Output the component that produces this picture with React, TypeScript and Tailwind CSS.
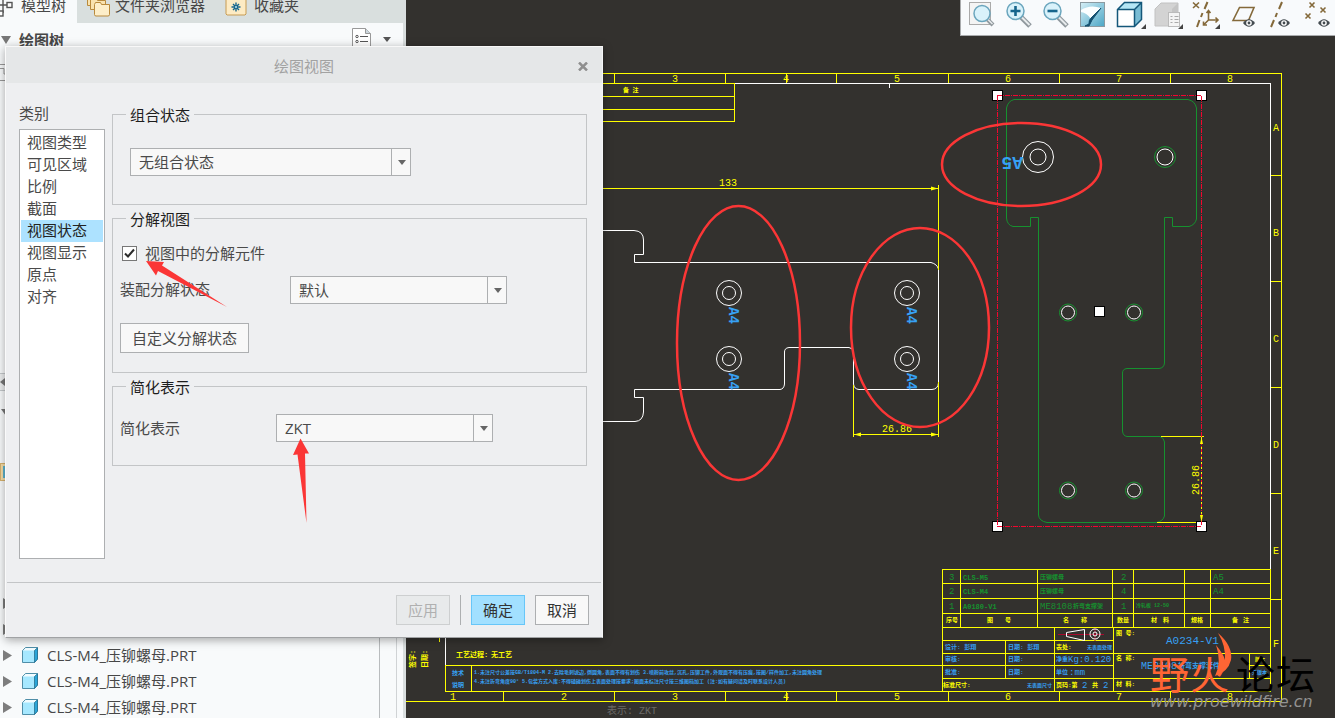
import { useState } from "react";
import type { ReactNode } from "react";

const YELLOW = "#ffff00";
const BLUE = "#37a0f4";
const GREEN = "#16912f";
const WHITE = "#ffffff";
const GRAY = "#6b6a68";

const categories = ["视图类型", "可见区域", "比例", "截面", "视图状态", "视图显示", "原点", "对齐"];

const parts = [1, 2, 3, 4, 5];

/* ---------- model tree pane ---------- */

function PartIcon() {
  return (
    <svg width="16" height="16" viewBox="0 0 16 16" className="shrink-0">
      <path d="M0.5 3.5 3.5 0.5H15.5V12L12.5 15.5H0.5Z" fill="#a6e8ff" stroke="#4f8ea8" />
      <path d="M1 3.5 3.700 1H15L12.500 3.500Z" fill="#f2fcff" />
      <path d="M12.500 3.500 15.500 0.800V12L12.500 15.500Z" fill="#2aa5d8" stroke="#27708f" strokeWidth="0.8" />
    </svg>
  );
}

function TreeTabIcon() {
  return (
    <svg width="13" height="24" viewBox="0 0 13 24" fill="none" stroke="#555" strokeWidth="1.4">
      <path d="M0 12H7M3 6V20" />
      <rect x="7" y="9.500" width="5" height="5" fill="#fff" />
      <rect x="-2" y="18" width="5" height="5" fill="#fff" />
    </svg>
  );
}

function FoldersIcon() {
  return (
    <svg width="24" height="24" viewBox="0 0 24 24" stroke="#b98a3c" fill="#f9e2ae">
      <path d="M1.500 1.500h6l1 2h7v9h-14z" />
      <path d="M4.500 5.500h6l1 2h8v9h-15z" />
      <path d="M8.500 11.500l1-2h5l1 2h8v10q0 1.500-1.500 1.500h-12q-1.500 0-1.500-1.500z" fill="#fdeec9" />
    </svg>
  );
}

function FavoritesIcon() {
  return (
    <svg width="22" height="24" viewBox="0 0 22 24">
      <path d="M1 2h20v19l-1 1H2l-1-1z" fill="#fdebc4" stroke="#c79b52" />
      <path d="M11 9.500v9M6.500 14h9M8 11l6 6M14 11l-6 6" stroke="#16658c" strokeWidth="1.400" />
      <circle cx="11" cy="14" r="1" fill="#bfe6f5" />
    </svg>
  );
}

function ModelTreePane() {
  return (
    <aside className="flex w-[406px] shrink-0 flex-col overflow-hidden border-r-[3px] border-[#d9dede] bg-[#f8fafb] text-[#474747]">
      <div className="-mt-[14px] flex h-[37px] shrink-0 bg-[#d9dfde]">
        <button className="flex w-[77px] items-center gap-2 bg-[#f8fafb]">
          <TreeTabIcon />
          模型树
        </button>
        <button className="flex w-[139px] items-center gap-[5px] pl-[9px]">
          <FoldersIcon />
          文件夹浏览器
        </button>
        <button className="flex items-center gap-[7px] pl-[9px]">
          <FavoritesIcon />
          收藏夹
        </button>
      </div>

      <div className="flex h-[33px] shrink-0 items-center pr-[12px] pl-[1px]">
        <svg width="10" height="8" viewBox="0 0 10 8">
          <path d="M0 0H10L5 8Z" fill="#777" />
        </svg>
        <h2 className="ml-2 font-bold">绘图树</h2>
        <button className="ml-auto flex items-center gap-3" aria-label="设置">
          <svg width="19" height="24" viewBox="0 0 19 24" fill="none" stroke="#999">
            <path d="M.5.5h13l5 5v18H.5z" fill="#fff" />
            <path d="M13.500.5v5h5" fill="#cdd8de" />
            <path d="M8 8.500h8M8 13.500h8M8 18.500h8" stroke="#555" />
            <circle cx="5" cy="8.500" r="1.200" stroke="#555" />
            <circle cx="5" cy="13.500" r="1.200" stroke="#555" />
          </svg>
          <svg width="8" height="5" viewBox="0 0 8 5">
            <path d="M0 0H8L4 5Z" fill="#555" />
          </svg>
        </button>
      </div>

      <div className="h-[317px] shrink-0 pt-[8px]">
        <svg width="8" height="17" viewBox="0 0 8 17" fill="none" stroke="#999">
          <path d="M0 .5H8M0 16.500H8M0 4.500H4V10H7" />
        </svg>
      </div>
      <div className="flex h-[18px] shrink-0 items-center border-y border-[#c4c8ca] bg-[#eceeef]">
        <svg width="5" height="8" viewBox="0 0 5 8">
          <path d="M5 0V8L0 4Z" fill="#777" />
        </svg>
      </div>
      <div className="h-[72px] shrink-0 pt-[18px] pl-[1px]">
        <svg width="10" height="7" viewBox="0 0 10 7">
          <path d="M0 0H10L5 7Z" fill="#777" />
        </svg>
      </div>
      <div className="h-[18px] w-[80px] shrink-0 border border-[#d8b36e] bg-[#f7dfa9] py-[2px] pl-[2px]">
        <div className="size-3 bg-[#5db4cf]" />
      </div>

      <div className="mt-[109px] flex min-h-0 flex-1">
        <ul className="w-[380px] border-r border-[#b9bcbe]">
          {parts.map((part) => (
            <li key={part} className="flex h-[26px] items-center pl-[3px]">
              <svg width="9" height="11" viewBox="0 0 9 11">
                <path d="M0 0 9 5.500 0 11Z" fill="#7d7d7d" />
              </svg>
              <span className="mr-[9px] ml-[10px]">
                <PartIcon />
              </span>
              <span>CLS-M4_压铆螺母.PRT</span>
            </li>
          ))}
        </ul>
        <div className="w-[17px] border-r border-[#d0d3d5]" />
      </div>
    </aside>
  );
}

/* ---------- graphics toolbar ---------- */

function Magnifier({ children }: { children?: ReactNode }) {
  return (
    <>
      <path d="M19 17 28 26" stroke="#8f979c" strokeWidth="5" />
      <path d="M20 17.500 27.500 25" stroke="#e8ebed" strokeWidth="2" />
      <circle cx="13.500" cy="11" r="8.500" fill="#d9f2fb" stroke="#6aa5bd" strokeWidth="1.500" />
      {children}
    </>
  );
}

function Eye({ x }: { x: number }) {
  return (
    <g>
      <path d={`M${x - 6} 23Q${x} 15.500 ${x + 6} 23Q${x} 30.500 ${x - 6} 23Z`} fill="#444b50" />
      <circle cx={x} cy="23" r="2.800" fill="#fff" />
      <circle cx={x} cy="23" r="1.400" fill="#444b50" />
    </g>
  );
}

function Corner() {
  return <path d="M33 24V29H28Z" fill="#444" />;
}

const tools: { name: string; icon: ReactNode }[] = [
  {
    name: "重新调整",
    icon: (
      <>
        <rect x="4.500" y="2.500" width="21" height="22" fill="#f4f4f4" stroke="#aaa" />
        <path d="M22 19 28 25" stroke="#8f979c" strokeWidth="4" />
        <path d="M23 19.500 27.500 24" stroke="#e8ebed" strokeWidth="1.500" />
        <circle cx="17" cy="13.500" r="8" fill="#d9f2fb" stroke="#6aa5bd" strokeWidth="1.500" />
      </>
    ),
  },
  {
    name: "放大",
    icon: (
      <Magnifier>
        <path d="M8.500 11h10M13.500 6v10" stroke="#16658c" strokeWidth="2.600" />
      </Magnifier>
    ),
  },
  {
    name: "缩小",
    icon: (
      <Magnifier>
        <path d="M8.500 11h10" stroke="#16658c" strokeWidth="2.600" />
      </Magnifier>
    ),
  },
  {
    name: "重画",
    icon: (
      <>
        <defs>
          <linearGradient id="repaint" x1="0" y1="0" x2="1" y2="1">
            <stop offset="0" stopColor="#d5eef6" />
            <stop offset="1" stopColor="#4ba6c6" />
          </linearGradient>
        </defs>
        <rect x="4.500" y="2.500" width="24" height="24" fill="url(#repaint)" stroke="#8b9aa1" />
        <path d="M5 10Q14 4 25 8L15 19Q11 13 5 12Z" fill="#fbfeff" />
        <path d="M25 8 14.500 18.500Q13 20 13 24L9 26H13L16 20Z" fill="#14506f" stroke="#14506f" />
      </>
    ),
  },
  {
    name: "显示样式",
    icon: (
      <>
        <path d="M4.500 9.500 11.500 2.500H28.500V19.500L21.500 26.500H4.500Z" fill="#b5e6f5" />
        <path d="M4.500 9.500H21.500V26.500H4.500Z" fill="#fff" />
        <path d="M21.500 9.500 28.500 2.500V19.500L21.500 26.500Z" fill="#79bcd4" />
        <path
          d="M4.500 9.500 11.500 2.500H28.500V19.500L21.500 26.500H4.500ZM4.500 9.500H21.500V26.500M21.500 9.500 28.500 2.500"
          fill="none"
          stroke="#14577a"
          strokeWidth="1.500"
        />
        <Corner />
      </>
    ),
  },
  {
    name: "视图管理器",
    icon: (
      <>
        <path d="M5 9 11 3H28V20L22 26H5Z" fill="#d3d3d3" stroke="#c2c2c2" />
        <path d="M22 9 28 3V20L22 26Z" fill="#c4c4c4" />
        <rect x="18.500" y="12.500" width="11" height="14" fill="#f4f4f4" stroke="#bbb" />
        <path d="M20.500 16.500h2M20.500 19.500h2M20.500 22.500h2M24.500 16.500h4M24.500 19.500h4M24.500 22.500h4" stroke="#aaa" />
        <Corner />
      </>
    ),
  },
  {
    name: "基准显示过滤器",
    icon: (
      <>
        <g fill="none" stroke="#84693a" strokeWidth="1.600">
          <path d="M6 2.500l6 5.500M12 2.500 6 8" />
          <path d="M20.500 2 17.500 9M15.500 13l-1.500 4M12.500 20 10 27" strokeWidth="2" />
          <path d="M21.500 11V20H31M21.500 20 16.500 25M19.500 13l2-2.500 2 2.500M28.500 17.500 31 20l-2.500 2.500M16.500 21.500V25H20" />
        </g>
        <Corner />
      </>
    ),
  },
  {
    name: "平面显示",
    icon: (
      <>
        <path d="M9 20.500 15.500 7.500H30L24.500 20.500Z" fill="none" stroke="#84693a" strokeWidth="1.600" />
        <Eye x={25} />
      </>
    ),
  },
  {
    name: "轴显示",
    icon: (
      <>
        <path d="M21 2 18 9M16 13l-1.500 4M13 20 10 27" stroke="#84693a" strokeWidth="2" />
        <Eye x={23} />
      </>
    ),
  },
  {
    name: "点显示",
    icon: (
      <>
        <path
          d="M11.500 2.500l5 5M16.500 2.500l-5 5M22.500 7.500l5 5M27.500 7.500l-5 5M7.500 13.500l5 5M12.500 13.500l-5 5"
          stroke="#84693a"
          strokeWidth="1.600"
        />
        <Eye x={26} />
      </>
    ),
  },
];

function GraphicsToolbar() {
  return (
    <div className="absolute top-0 right-0 flex h-9 border-b border-l border-[#a9abad] bg-[#f8fafc] pl-1">
      {tools.map((tool) => (
        <button key={tool.name} aria-label={tool.name} title={tool.name} className="w-[37px]">
          <svg width="37" height="35" viewBox="0 0 37 35">
            {tool.icon}
          </svg>
        </button>
      ))}
    </div>
  );
}

/* ---------- drawing sheet ---------- */

type Label = [x: number, y: number, text: string, size: number, color: string];

const labels: Label[] = [
  // zone marks
  [672, 82, "3", 10, YELLOW],
  [783, 82, "4", 10, YELLOW],
  [894, 82, "5", 10, YELLOW],
  [1005, 82, "6", 10, YELLOW],
  [1116, 82, "7", 10, YELLOW],
  [1227, 82, "8", 10, YELLOW],
  [450, 700, "1", 10, YELLOW],
  [561, 700, "2", 10, YELLOW],
  [672, 700, "3", 10, YELLOW],
  [783, 700, "4", 10, YELLOW],
  [894, 700, "5", 10, YELLOW],
  [1005, 700, "6", 10, YELLOW],
  [1116, 700, "7", 10, YELLOW],
  [1227, 700, "8", 10, YELLOW],
  [1273, 131, "A", 10, YELLOW],
  [1273, 236, "B", 10, YELLOW],
  [1273, 342, "C", 10, YELLOW],
  [1273, 448, "D", 10, YELLOW],
  [1273, 554, "E", 10, YELLOW],
  [1273, 647, "F", 10, YELLOW],
  [623, 92, "备 注", 6, YELLOW],
  // dimensions
  [719, 186, "133", 10, YELLOW],
  [882, 432, "26.86", 10, YELLOW],
  // process notes
  [456, 657, "工艺过程:", 7, YELLOW],
  [491, 657, "无工艺", 7, YELLOW],
  [452, 675, "技术", 6, BLUE],
  [452, 687, "说明", 6, BLUE],
  [
    474,
    674,
    "1.未注尺寸公差按GB/T1804-M 2.去除毛刺锐边,倒圆角,表面不得有划伤 3.喷粉前攻丝,沉孔,压铆工件,外观面不得有压痕,按图/样件加工,未注圆角处理",
    5,
    BLUE,
  ],
  [
    474,
    683,
    "4.未注折弯角度90° 5.包装方式入库:不得磕碰划伤上表面处理按要求;图面未标注尺寸按三维图档加工 (注:如有疑问请及时联系设计人员)",
    5,
    BLUE,
  ],
  [607, 714, "表示: ZKT", 10, GRAY],
  // parts list
  [949, 580, "3", 9, GREEN],
  [949, 594, "2", 9, GREEN],
  [949, 609, "1", 9, GREEN],
  [963, 580, "CLS-M5", 7, GREEN],
  [963, 594, "CLS-M4", 7, GREEN],
  [963, 609, "A0180-V1", 7, GREEN],
  [1040, 579, "压铆螺母", 6, GREEN],
  [1040, 593, "压铆螺母", 6, GREEN],
  [1040, 609, "ME8108", 9, GREEN],
  [1073, 608, "折弯支撑架", 6, GREEN],
  [1121, 580, "2", 9, GREEN],
  [1121, 594, "4", 9, GREEN],
  [1121, 609, "1", 9, GREEN],
  [1136, 607, "冷轧板 12-50", 5, GREEN],
  [1213, 580, "A5", 9, GREEN],
  [1213, 594, "A4", 9, GREEN],
  [946, 622, "序号", 6, YELLOW],
  [987, 622, "图", 6, YELLOW],
  [1005, 622, "号", 6, YELLOW],
  [1063, 622, "名", 6, YELLOW],
  [1081, 622, "称", 6, YELLOW],
  [1117, 622, "数量", 6, YELLOW],
  [1151, 622, "材", 6, YELLOW],
  [1163, 622, "料", 6, YELLOW],
  [1191, 622, "规格", 6, YELLOW],
  [1232, 622, "备", 6, YELLOW],
  [1243, 622, "注", 6, YELLOW],
  // title block
  [945, 649, "设计: 彭翔", 6, BLUE],
  [1008, 649, "日期: 彭翔", 6, BLUE],
  [945, 661, "审核:", 6, BLUE],
  [1008, 661, "日期:", 6, BLUE],
  [945, 674, "批准:", 6, BLUE],
  [1008, 674, "日期:", 6, BLUE],
  [943, 687, "标准尺寸:", 6, YELLOW],
  [1027, 687, "无表面尺寸", 5, BLUE],
  [1056, 649, "表处:", 6, YELLOW],
  [1087, 649, "无表面处理", 5, BLUE],
  [1056, 661, "净重", 6, BLUE],
  [1068, 662, "Kg:0.120", 9, BLUE],
  [1056, 674, "单位", 6, BLUE],
  [1069, 675, ":mm", 9, BLUE],
  [1056, 687, "页码:第", 6, YELLOW],
  [1082, 688, "2", 9, BLUE],
  [1092, 687, "共", 6, YELLOW],
  [1103, 688, "2", 9, BLUE],
  [1116, 635, "图 号:", 6, YELLOW],
  [1166, 644, "A0234-V1", 11, BLUE],
  [1116, 660, "名 称:", 6, YELLOW],
  [1141, 669, "ME8108", 10, BLUE],
  [1178, 668, "折弯支撑套件", 7, BLUE],
  [1116, 686, "材 料:", 6, YELLOW],
  [1255, 661, "版本", 5, YELLOW],
  [1252, 674, "无版本", 5, BLUE],
];

const rows = (ys: number[], x1: number, x2: number) => ys.map((y) => `M${x1} ${y}.5H${x2}`).join("");
const cols = (xs: number[], y1: number, y2: number) => xs.map((x) => `M${x}.5 ${y1}V${y2}`).join("");

const zones = [614, 725, 836, 948, 1059, 1170];

const sheetLines = [
  rows([73], 406, 1282),
  rows([701], 406, 1282),
  cols([1281], 73, 702),
  cols(zones, 73, 83),
  cols([503, ...zones], 691, 701),
  cols([786], 73, 83),
  cols([786], 691, 701),
  rows([175, 281, 387, 493, 599], 1270, 1281),
  // revision table
  rows([83, 96, 109, 121], 600, 735),
  cols([734], 83, 122),
  // notes block
  rows([665, 691], 445, 942),
  cols([445, 471], 665, 691),
  // parts list
  rows([569, 583, 598, 613, 627], 942, 1271),
  cols([942, 960, 1037, 1112, 1133, 1184, 1210, 1270], 569, 627),
  // title block
  cols([942, 1054, 1113, 1270], 627, 691),
  cols([1005], 640, 678),
  rows([640, 665], 942, 1113),
  rows([653, 678, 691], 942, 1271),
  cols([1249], 653, 678),
  rows([665], 1249, 1270),
].join("");

const nuts = [
  [729, 293],
  [907, 293],
  [729, 359],
  [907, 359],
];
const holes = [
  [1068, 312],
  [1134, 312],
  [1068, 490],
  [1134, 490],
];
const handles = [
  [997, 95],
  [1201, 95],
  [1099, 311],
  [997, 526],
  [1201, 526],
];

function DrawingSheet() {
  return (
    <main className="min-w-0 flex-1 overflow-hidden bg-[#33312e]">
      <svg
        width="929"
        height="718"
        viewBox="406 0 929 718"
        fill="none"
        className="max-w-none font-['Liberation_Mono','Noto_Sans_CJK_SC',monospace]"
      >
        <g shapeRendering="crispEdges">
          <path d={sheetLines} stroke={YELLOW} />
          <path d="M735 83.500H1270.500V569M889.500 84v4M445.500 637V665" stroke={WHITE} />
        </g>

        {/* front view */}
        <path
          d="M600 230.500H634Q643.500 231 643.500 240V254.500H634.500V262.500H931Q937 264 938.500 269V383Q938 389 932 389.500H859Q854 389 853.500 384V352Q853 348 849 347.500H789Q784 348 784.500 353V384Q784 389 780 389.500H634.500V397.500H643.500V412Q643 421 635 421.500H600"
          stroke={WHITE}
        />
        {nuts.map(([x, y]) => (
          <g key={`${x}-${y}`}>
            <circle cx={x} cy={y} r="12.500" stroke={WHITE} />
            <circle cx={x} cy={y} r="6.500" stroke={WHITE} />
            <text transform={`translate(${x} ${y + 14}) rotate(90)`} fontSize="14" fontWeight="bold" fill={BLUE}>
              A4
            </text>
          </g>
        ))}
        <path
          d="M600 188.500H938M938.500 185V270M938.500 382V437M853.500 385V437M853 434.500H939"
          stroke={YELLOW}
          shapeRendering="crispEdges"
        />
        <path d="M938 188.500l-7-2v4zM854 434.500l7-2v4zM938 434.500l-7-2v4z" fill={YELLOW} />

        {/* selected view */}
        <path
          d="M1014 99.500H1188Q1195 101 1196.500 108V219Q1195 225 1189 226.500H1172.500V217.500H1164.500V363Q1164 368 1159 368.500H1127Q1122 369 1122.500 374V431Q1123 436 1127 436.500H1160Q1164 438 1164.500 442V516Q1163 521 1157 522.500H1047Q1039 521 1038.500 515V217.500H1030.500V226.500H1013Q1007 225 1006.500 218V108Q1008 101 1014 99.500Z"
          stroke={GREEN}
        />
        <circle cx="1038" cy="157" r="15.500" stroke={WHITE} />
        <circle cx="1038" cy="157" r="8" stroke={WHITE} />
        <circle cx="1165" cy="157" r="10.500" stroke={GREEN} />
        <circle cx="1165" cy="157" r="8" stroke={WHITE} />
        {holes.map(([x, y]) => (
          <g key={`${x}-${y}`}>
            <circle cx={x} cy={y + 0.5} r="8.500" stroke={GREEN} />
            <circle cx={x} cy={y + 0.5} r="6.500" stroke={WHITE} />
          </g>
        ))}
        <text transform="translate(1023 157) rotate(180)" fontSize="18" fontWeight="bold" fill={BLUE}>
          A5
        </text>
        <g shapeRendering="crispEdges">
          <path d="M1161 436.500H1204M1157 522.500H1197" stroke={YELLOW} />
          {handles.map(([x, y]) => (
            <rect key={`${x}-${y}`} x={x - 4.5} y={y - 4.5} width="10" height="10" fill="#fff" stroke="#000" />
          ))}
          <g stroke="#f2062f" strokeDasharray="5 1 1 1">
            <path d="M997 95.500H1201" />
            <path d="M997.500 96V526" />
            <path d="M1201.500 96V526" />
            <path d="M997 526.500H1201" />
          </g>
          <path d="M1201.500 437V522" stroke={YELLOW} strokeDasharray="2 3" />
        </g>
        <path d="M1201.500 437l-1.500 7h3zM1201.500 522l-1.500-7h3z" fill={YELLOW} />
        <text transform="translate(1199 495) rotate(-90)" fontSize="10" fill={YELLOW}>
          26.86
        </text>

        {/* first angle projection symbol */}
        <path d="M1058 634.500H1104M1095 628v13" stroke="#a80a2c" />
        <path d="M1066.500 632.500 1084.500 629.500V640.500L1066.500 636.500Z" stroke={WHITE} />
        <circle cx="1095" cy="634" r="5" stroke={WHITE} />
        <circle cx="1095" cy="634" r="2" stroke={WHITE} />

        {labels.map(([x, y, text, size, color]) => (
          <text key={`${x}-${y}`} x={x} y={y} fontSize={size} fontWeight={size < 8 ? 700 : 400} fill={color}>
            {text}
          </text>
        ))}
        <g fontSize="7" fontWeight="bold" fill={YELLOW}>
          <text transform="translate(415 668) rotate(-90)">签字:</text>
          <text transform="translate(427 668) rotate(-90)">日期:</text>
        </g>
        <path d="M439.500 637v5" stroke={YELLOW} />

        {/* review marks */}
        <g stroke="#fb3636" strokeWidth="2.500">
          <ellipse cx="738.500" cy="343" rx="61.500" ry="137" />
          <ellipse cx="920" cy="327.500" rx="69" ry="99.500" />
          <ellipse cx="1021.500" cy="164.500" rx="79.500" ry="41.500" />
        </g>

        {/* forum watermark */}
        <g className="font-['Noto_Sans_CJK_SC',sans-serif]" fontSize="39">
          <text x="1150" y="689" fill="#ff6534">
            野
          </text>
          <text x="1190" y="689" fill="#ff6534">
            火
          </text>
          <text x="1236" y="689" fill="#000">
            论
          </text>
          <text x="1276" y="689" fill="#000">
            坛
          </text>
        </g>
        <path d="M1218 633Q1233 646 1231 660Q1228 672 1215 676Q1222 662 1216 645Q1224 655 1225 660Q1226 646 1218 633Z" fill="#ff6534" />
        <text x="1150" y="707" fontSize="16" fontStyle="italic" fill="#929291" className="font-['DejaVu_Sans',sans-serif]">
          www.proewildfire.cn
        </text>
      </svg>
    </main>
  );
}

/* ---------- dialog ---------- */

interface ComboProps {
  id: string;
  value: string;
  label?: string;
  className: string;
}

function Combo({ id, value, label, className }: ComboProps) {
  return (
    <div className={`relative h-7 ${className}`}>
      <select
        id={id}
        aria-label={label}
        defaultValue={value}
        className="size-full appearance-none border border-[#adafb1] bg-[#f8f8f8] pl-2 text-[#4a4a4a] outline-none"
      >
        <option>{value}</option>
      </select>
      <span className="pointer-events-none absolute inset-y-0 right-0 flex w-5 items-center justify-center border-l border-[#adafb1]">
        <svg width="8" height="5" viewBox="0 0 8 5">
          <path d="M0 0H8L4 5Z" fill="#666" />
        </svg>
      </span>
    </div>
  );
}

function Group({ title, className, children }: { title: string; className: string; children: ReactNode }) {
  return (
    <fieldset className={`border border-[#c3c5c7] px-[7px] ${className}`}>
      <legend className="ml-[6px] h-5 px-1 leading-[22px] text-[#1d1d1d]">{title}</legend>
      {children}
    </fieldset>
  );
}

function DrawingViewDialog() {
  const [active, setActive] = useState("视图状态");
  const [exploded, setExploded] = useState(true);

  return (
    <div
      role="dialog"
      aria-label="绘图视图"
      className="absolute top-[46px] left-[5px] flex h-[592px] w-[598px] flex-col border border-t-[#f8f8f8] border-r-[#f4f5f6] border-b-[#a0a2a4] border-l-[#fafafa] bg-[#eeeff1] text-[#4a4a4a] shadow-[0_2px_9px_rgba(0,0,0,0.35)]"
    >
      <header className="relative flex h-9 shrink-0 items-center justify-center bg-[#e5e7e8] pt-[2px] text-[#a2a2a2]">
        绘图视图
        <button aria-label="关闭" className="absolute right-[14px]">
          <svg width="10" height="9" viewBox="0 0 10 9">
            <path d="M1 .5l8 8M9 .5l-8 8" stroke="#8f8f8f" strokeWidth="2.500" />
          </svg>
        </button>
      </header>

      <div className="flex flex-1 gap-[7px] pt-5 pr-[15px] pl-[13px]">
        <div className="w-[86px]">
          <h3 id="category" className="h-[26px] leading-5">
            类别
          </h3>
          <ul role="listbox" aria-labelledby="category" className="h-[430px] border border-[#adafb1] bg-white px-px pt-[2px]">
            {categories.map((name) => (
              <li
                key={name}
                role="option"
                aria-selected={name === active}
                onClick={() => setActive(name)}
                className={`h-[22px] pl-[6px] leading-5 ${name === active ? "bg-[#ade2ff] text-[#222]" : ""}`}
              >
                {name}
              </li>
            ))}
          </ul>
        </div>

        <div className="flex flex-1 flex-col gap-[3px] pt-[1px]">
          <Group title="组合状态" className="h-[101px]">
            <Combo id="combined" value="无组合状态" label="组合状态" className="mt-6 ml-[10px] w-[281px]" />
          </Group>

          <Group title="分解视图" className="h-[165px]">
            <label className="mt-[15px] ml-[2px] flex h-5 items-center gap-2">
              <span className="relative flex size-[15px]">
                <input
                  type="checkbox"
                  checked={exploded}
                  onChange={(e) => setExploded(e.target.checked)}
                  className="size-[15px] appearance-none border border-[#777] bg-white"
                />
                {exploded && (
                  <svg width="15" height="15" viewBox="0 0 15 15" className="pointer-events-none absolute inset-0">
                    <path d="M3 7.500 6 10.500 12 3.500" fill="none" stroke="#2b2b2b" strokeWidth="2" />
                  </svg>
                )}
              </span>
              视图中的分解元件
            </label>
            <div className="mt-[13px] flex items-start">
              <label htmlFor="explode-state" className="w-[170px] leading-[26px]">
                装配分解状态
              </label>
              <Combo id="explode-state" value="默认" className="w-[217px]" />
            </div>
            <button className="mt-[19px] h-[30px] w-[129px] border border-[#adafb1] bg-[#f8f8f8]">自定义分解状态</button>
          </Group>

          <Group title="简化表示" className="h-[90px]">
            <div className="mt-[18px] flex items-center">
              <label htmlFor="simplified" className="w-[156px]">
                简化表示
              </label>
              <Combo id="simplified" value="ZKT" className="w-[217px]" />
            </div>
          </Group>
        </div>
      </div>

      <footer className="mx-px flex h-[55px] shrink-0 justify-end gap-[10px] border-t border-[#c3c5c7] pt-3 pr-[12px]">
        <button disabled className="h-[30px] w-[54px] border border-[#cdcfd0] bg-[#e8eaeb] text-[#b0b0b0]">
          应用
        </button>
        <span className="h-[30px] w-px bg-[#adafb1]" />
        <button className="h-[30px] w-[54px] border border-[#67c6f8] bg-[#a2e0ff] text-[#333]">确定</button>
        <button className="h-[30px] w-[54px] border border-[#adafb1] bg-[#f8f8f8] text-[#333]">取消</button>
      </footer>

      <svg width="598" height="592" viewBox="6 47 598 592" className="pointer-events-none absolute inset-0" fill="#fb3636">
        <path d="M146 261 164 262 162 265.500 227 307 158 271 156 275.500Z" />
        <path d="M300.500 438.500 309 453.500H305L306.500 523 297.500 454.500 293 455Z" />
      </svg>
    </div>
  );
}

export default function App() {
  return (
    <div className="relative flex h-screen overflow-hidden font-['Open_Sans','Noto_Sans_CJK_SC',sans-serif] text-[15px] leading-5">
      <ModelTreePane />
      <DrawingSheet />
      <GraphicsToolbar />
      <DrawingViewDialog />
    </div>
  );
}
